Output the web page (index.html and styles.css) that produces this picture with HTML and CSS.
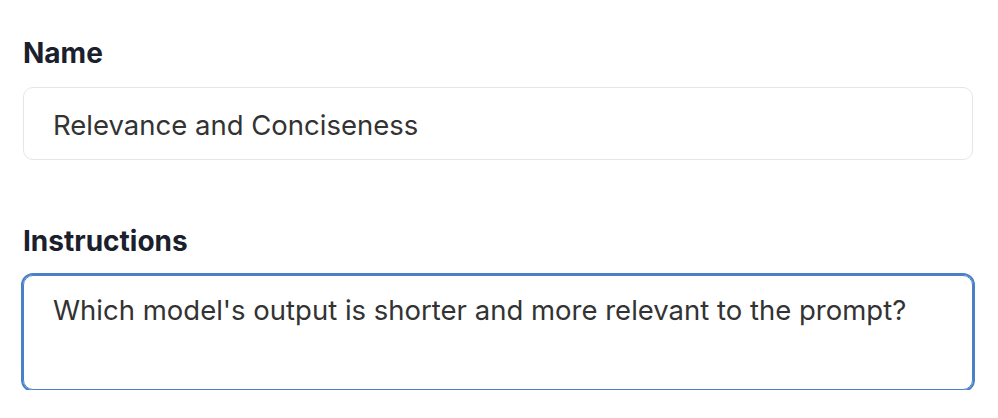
FILE: index.html
```html
<!DOCTYPE html>
<html lang="en">
<head>
  <meta charset="UTF-8">
  <title>Evaluator Settings</title>
  <link rel="stylesheet" href="styles.css">
</head>
<body>

<div class="form">
  <div class="field">
    <label for="name">Name</label>
    <input type="text" id="name" value="Relevance and Conciseness">
  </div>

  <div class="field">
    <label for="instructions">Instructions</label>
    <textarea id="instructions" class="focused">Which model's output is shorter and more relevant to the prompt?</textarea>
  </div>
</div>

</body>
</html>
```

FILE: styles.css
```css
body {
  font-family: Inter, 'Noto Sans', sans-serif;
  background: #ffffff;
  margin: 0;
  padding: 0;
}

.form {
  padding: 35px 25px 0 23px;
  display: flex;
  flex-direction: column;
  gap: 63px;
}

.field {
  display: flex;
  flex-direction: column;
}

label {
  display: block;
  margin-bottom: 16px;
  color: #1a202c;
  font-size: 28px;
  font-weight: 700;
  line-height: 36px;
}

input[type="text"],
textarea {
  box-sizing: border-box;
  width: 100%;
  font-family: Inter, 'Noto Sans', sans-serif;
  font-size: 27.5px;
  color: #333;
  border: 1px solid #e6e6e6;
  border-radius: 10px;
  background: #fff;
  padding: 0 29px;
  outline: none;
}

input[type="text"] {
  height: 73px;
  padding-top: 3px;
}

textarea {
  height: 115px;
  padding-top: 16px;
  resize: none;
  line-height: 36px;
}

textarea.focused {
  border-color: #4a80c8;
  outline: 2px solid #4a80c8;
}
```
